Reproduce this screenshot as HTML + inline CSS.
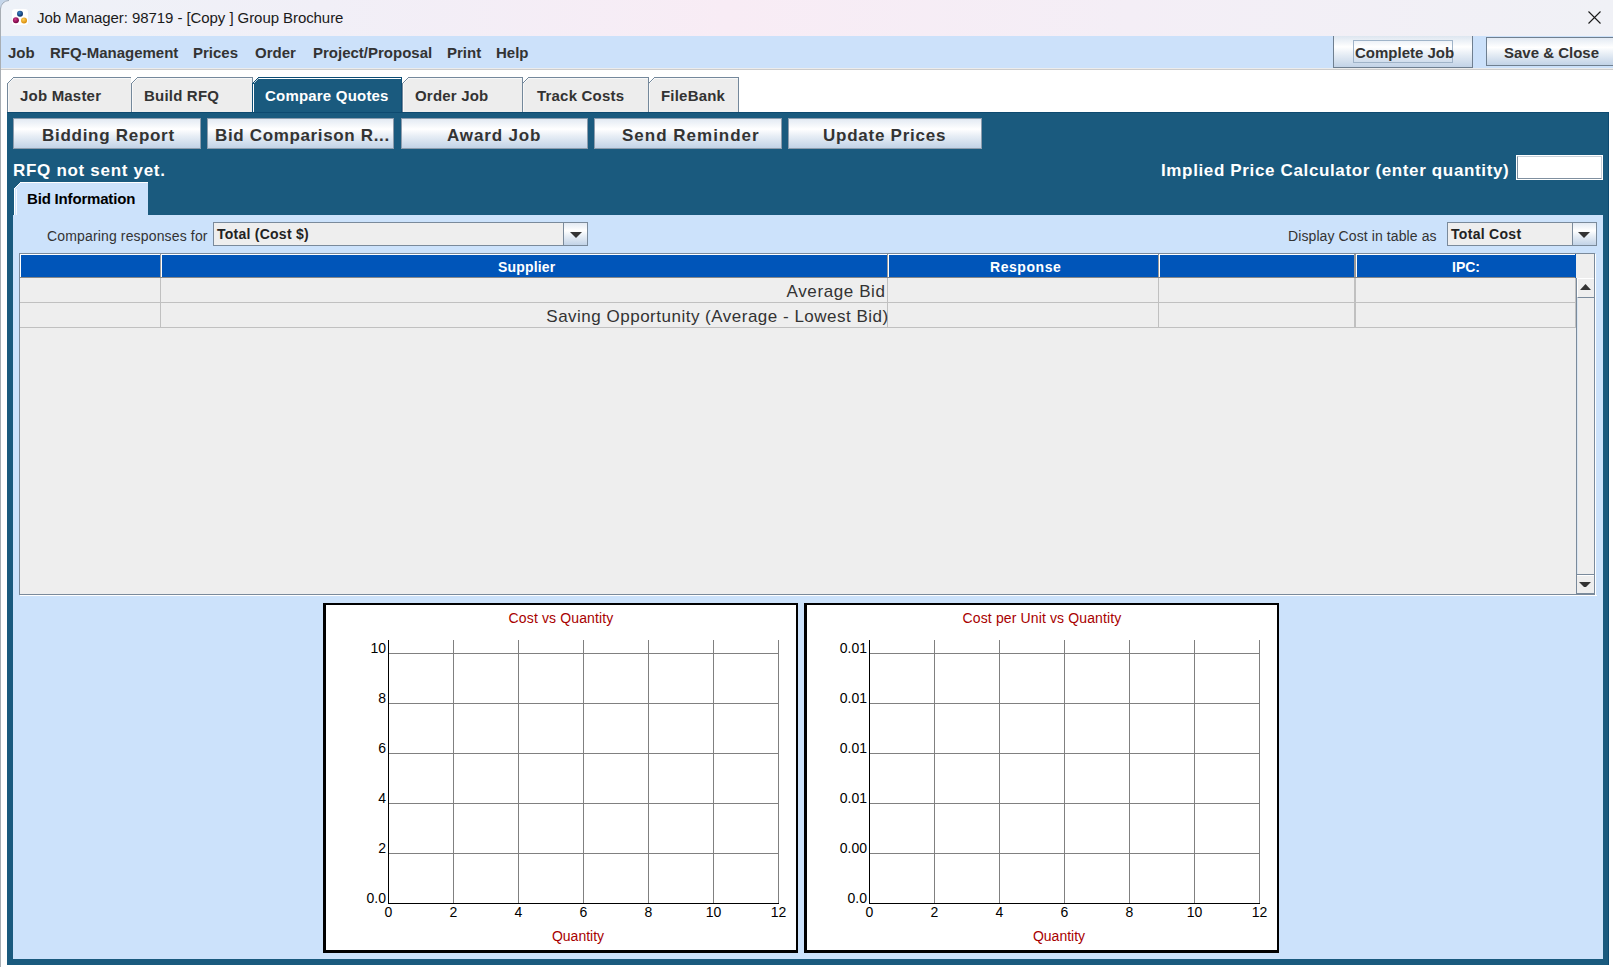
<!DOCTYPE html>
<html><head><meta charset="utf-8">
<style>
*{box-sizing:border-box;margin:0;padding:0}
html,body{width:1613px;height:967px;overflow:hidden;background:#fff;font-family:"Liberation Sans",sans-serif;position:relative}
.a{position:absolute;white-space:nowrap}
#title{left:0;top:0;width:1613px;height:36px;background:linear-gradient(90deg,#eef2f8 0%,#f1eff7 20%,#f8ecf5 45%,#f4eef6 70%,#f0f1f6 100%)}
#menubar{left:0;top:36px;width:1613px;height:32px;background:#cce1fa}
.mi{position:absolute;top:44px;font-size:15px;font-weight:bold;color:#333;white-space:nowrap}
.tab{position:absolute;top:77px;height:35px;background:#ededed;border-top:1px solid #6f8397;border-right:1px solid #6f8397;border-left:1px solid #6f8397;font-size:15px;font-weight:bold;color:#333;white-space:nowrap}
.tab span{position:absolute;top:9px}
.btn{position:absolute;top:118px;height:31px;background:linear-gradient(#e3eaf3 0%,#ffffff 35%,#e6edf5 60%,#c2d3e7 100%);border:1px solid #8c9cad;font-size:17px;font-weight:bold;color:#333;white-space:nowrap}
.btn span{position:absolute;top:7px}
.tl{position:absolute;top:87px;font-size:15px;font-weight:bold;white-space:nowrap;letter-spacing:0.2px}
.cl{position:absolute;font-size:14px;color:#000;white-space:nowrap}
.ct{position:absolute;font-size:14px;color:#a80000;text-align:center;white-space:nowrap}
.combo{position:absolute;top:222px;height:24px;background:#eeeeee;border:1px solid #7a8a9b}
.cbtn{position:absolute;top:222px;height:24px;width:25px;border:1px solid #7a8a9b;background:linear-gradient(#e3eaf3 0%,#ffffff 35%,#e6edf5 60%,#c2d3e7 100%)}
.hd{position:absolute;top:255px;height:22px;background:#0055b9}
.hdw{position:absolute;top:255px;width:1px;height:22px;background:#fff}
.hdt{position:absolute;top:259px;font-size:14px;font-weight:bold;color:#fff;white-space:nowrap}
.gl{position:absolute;background:#c0c0c0}
</style></head>
<body>
<div class="a" id="title"></div>
<!-- window icon -->
<svg class="a" style="left:12px;top:9px" width="16" height="16" viewBox="0 0 16 16">
<rect x="0" y="0" width="16" height="16" rx="3" fill="#fff"/>
<defs>
<radialGradient id="gb" cx="0.4" cy="0.35" r="0.65"><stop offset="0" stop-color="#3f86c8"/><stop offset="1" stop-color="#0b2f63"/></radialGradient>
<radialGradient id="gm" cx="0.4" cy="0.35" r="0.65"><stop offset="0" stop-color="#d03a8a"/><stop offset="1" stop-color="#72003e"/></radialGradient>
<radialGradient id="go" cx="0.4" cy="0.35" r="0.65"><stop offset="0" stop-color="#ffd15a"/><stop offset="1" stop-color="#d78a08"/></radialGradient>
</defs>
<circle cx="8" cy="4.7" r="3" fill="url(#gb)"/>
<circle cx="3.9" cy="11.3" r="3" fill="url(#gm)"/>
<circle cx="12" cy="11.5" r="3" fill="url(#go)"/>
</svg>
<div class="a" style="left:37px;top:9px;font-size:15px;color:#1a1a1a;letter-spacing:-0.07px">Job Manager: 98719 - [Copy ] Group Brochure</div>
<svg class="a" style="left:1588px;top:11px" width="13" height="13" viewBox="0 0 13 13"><path d="M0.5 0.5L12.5 12.5M12.5 0.5L0.5 12.5" stroke="#1a1a1a" stroke-width="1.1"/></svg>
<div class="a" id="menubar"></div>
<div class="a" style="left:0;top:68px;width:1613px;height:1px;background:#ececec"></div>
<div class="a" style="left:0;top:69px;width:1613px;height:1px;background:#cccccc"></div>
<div class="a" style="left:0;top:70px;width:1613px;height:897px;background:#fff"></div>
<div class="mi" style="left:8px">Job</div>
<div class="mi" style="left:50px">RFQ-Management</div>
<div class="mi" style="left:193px">Prices</div>
<div class="mi" style="left:255px">Order</div>
<div class="mi" style="left:313px">Project/Proposal</div>
<div class="mi" style="left:447px">Print</div>
<div class="mi" style="left:496px">Help</div>
<!-- top right buttons -->
<div class="a" style="left:1333px;top:36px;width:140px;height:32px;background:linear-gradient(#dde6f0 0%,#ffffff 35%,#e6edf5 60%,#c2d3e7 100%);border:1px solid #6f7f90;border-top:none"></div>
<div class="a" style="left:1353px;top:40px;width:100px;height:23px;border:1px solid #9fb3c8"></div>
<div class="a" style="left:1355px;top:44px;font-size:15px;font-weight:bold;color:#333">Complete Job</div>
<div class="a" style="left:1486px;top:37px;width:140px;height:29px;background:linear-gradient(#e3eaf3 0%,#ffffff 35%,#e6edf5 60%,#c2d3e7 100%);border:1px solid #6f7f90"></div>
<div class="a" style="left:1504px;top:44px;font-size:15px;font-weight:bold;color:#333">Save &amp; Close</div>

<!-- left window border -->
<svg class="a" style="left:0;top:0" width="10" height="10"><path d="M0 0H9A9 9 0 0 0 0 9Z" fill="#c5d6ea"/><path d="M9 0.5A8.5 8.5 0 0 0 0.5 9" fill="none" stroke="#9aa8b8" stroke-width="1"/></svg>
<div class="a" style="left:0;top:9px;width:1px;height:958px;background:#a8aeb4"></div>

<!-- tabs -->
<svg class="a" style="left:0;top:70px" width="760" height="43" shape-rendering="crispEdges">
<polygon points="7,42 7,13 13,7 131,7 131,42" fill="#ededed"/>
<rect x="14" y="8" width="116" height="1" fill="#fff" opacity="0.6"/>
<rect x="8" y="14" width="1" height="28" fill="#fff" opacity="0.6"/>
<rect x="7" y="13" width="1" height="29" fill="#74889b"/>
<rect x="13" y="7" width="118" height="1" fill="#74889b"/>
<rect x="8" y="12" width="1" height="1" fill="#74889b"/>
<rect x="9" y="12" width="1" height="1" fill="#fff" opacity="0.7"/>
<rect x="9" y="11" width="1" height="1" fill="#74889b"/>
<rect x="10" y="11" width="1" height="1" fill="#fff" opacity="0.7"/>
<rect x="10" y="10" width="1" height="1" fill="#74889b"/>
<rect x="11" y="10" width="1" height="1" fill="#fff" opacity="0.7"/>
<rect x="11" y="9" width="1" height="1" fill="#74889b"/>
<rect x="12" y="9" width="1" height="1" fill="#fff" opacity="0.7"/>
<rect x="12" y="8" width="1" height="1" fill="#74889b"/>
<rect x="13" y="8" width="1" height="1" fill="#fff" opacity="0.7"/>
<polygon points="131,42 131,13 137,7 253,7 253,42" fill="#ededed"/>
<rect x="138" y="8" width="114" height="1" fill="#fff" opacity="0.6"/>
<rect x="132" y="14" width="1" height="28" fill="#fff" opacity="0.6"/>
<rect x="131" y="13" width="1" height="29" fill="#74889b"/>
<rect x="137" y="7" width="116" height="1" fill="#74889b"/>
<rect x="132" y="12" width="1" height="1" fill="#74889b"/>
<rect x="133" y="12" width="1" height="1" fill="#fff" opacity="0.7"/>
<rect x="133" y="11" width="1" height="1" fill="#74889b"/>
<rect x="134" y="11" width="1" height="1" fill="#fff" opacity="0.7"/>
<rect x="134" y="10" width="1" height="1" fill="#74889b"/>
<rect x="135" y="10" width="1" height="1" fill="#fff" opacity="0.7"/>
<rect x="135" y="9" width="1" height="1" fill="#74889b"/>
<rect x="136" y="9" width="1" height="1" fill="#fff" opacity="0.7"/>
<rect x="136" y="8" width="1" height="1" fill="#74889b"/>
<rect x="137" y="8" width="1" height="1" fill="#fff" opacity="0.7"/>
<rect x="252" y="7" width="1" height="35" fill="#74889b"/>
<polygon points="252,42 252,13 258,7 402,7 402,42" fill="#1a5a7e"/>
<rect x="259" y="8" width="142" height="1" fill="#fff" opacity="1"/>
<rect x="253" y="14" width="1" height="28" fill="#fff" opacity="1"/>
<rect x="252" y="13" width="1" height="29" fill="#0d4d75"/>
<rect x="258" y="7" width="144" height="1" fill="#0d4d75"/>
<rect x="253" y="12" width="1" height="1" fill="#0d4d75"/>
<rect x="254" y="12" width="1" height="1" fill="#fff" opacity="0.7"/>
<rect x="254" y="11" width="1" height="1" fill="#0d4d75"/>
<rect x="255" y="11" width="1" height="1" fill="#fff" opacity="0.7"/>
<rect x="255" y="10" width="1" height="1" fill="#0d4d75"/>
<rect x="256" y="10" width="1" height="1" fill="#fff" opacity="0.7"/>
<rect x="256" y="9" width="1" height="1" fill="#0d4d75"/>
<rect x="257" y="9" width="1" height="1" fill="#fff" opacity="0.7"/>
<rect x="257" y="8" width="1" height="1" fill="#0d4d75"/>
<rect x="258" y="8" width="1" height="1" fill="#fff" opacity="0.7"/>
<rect x="401" y="7" width="1" height="35" fill="#0d4d75"/>
<polygon points="402,42 402,13 408,7 523,7 523,42" fill="#ededed"/>
<rect x="409" y="8" width="113" height="1" fill="#fff" opacity="0.6"/>
<rect x="403" y="14" width="1" height="28" fill="#fff" opacity="0.6"/>
<rect x="402" y="13" width="1" height="29" fill="#74889b"/>
<rect x="408" y="7" width="115" height="1" fill="#74889b"/>
<rect x="403" y="12" width="1" height="1" fill="#74889b"/>
<rect x="404" y="12" width="1" height="1" fill="#fff" opacity="0.7"/>
<rect x="404" y="11" width="1" height="1" fill="#74889b"/>
<rect x="405" y="11" width="1" height="1" fill="#fff" opacity="0.7"/>
<rect x="405" y="10" width="1" height="1" fill="#74889b"/>
<rect x="406" y="10" width="1" height="1" fill="#fff" opacity="0.7"/>
<rect x="406" y="9" width="1" height="1" fill="#74889b"/>
<rect x="407" y="9" width="1" height="1" fill="#fff" opacity="0.7"/>
<rect x="407" y="8" width="1" height="1" fill="#74889b"/>
<rect x="408" y="8" width="1" height="1" fill="#fff" opacity="0.7"/>
<rect x="522" y="7" width="1" height="35" fill="#74889b"/>
<polygon points="522,42 522,13 528,7 649,7 649,42" fill="#ededed"/>
<rect x="529" y="8" width="119" height="1" fill="#fff" opacity="0.6"/>
<rect x="523" y="14" width="1" height="28" fill="#fff" opacity="0.6"/>
<rect x="522" y="13" width="1" height="29" fill="#74889b"/>
<rect x="528" y="7" width="121" height="1" fill="#74889b"/>
<rect x="523" y="12" width="1" height="1" fill="#74889b"/>
<rect x="524" y="12" width="1" height="1" fill="#fff" opacity="0.7"/>
<rect x="524" y="11" width="1" height="1" fill="#74889b"/>
<rect x="525" y="11" width="1" height="1" fill="#fff" opacity="0.7"/>
<rect x="525" y="10" width="1" height="1" fill="#74889b"/>
<rect x="526" y="10" width="1" height="1" fill="#fff" opacity="0.7"/>
<rect x="526" y="9" width="1" height="1" fill="#74889b"/>
<rect x="527" y="9" width="1" height="1" fill="#fff" opacity="0.7"/>
<rect x="527" y="8" width="1" height="1" fill="#74889b"/>
<rect x="528" y="8" width="1" height="1" fill="#fff" opacity="0.7"/>
<rect x="648" y="7" width="1" height="35" fill="#74889b"/>
<polygon points="648,42 648,13 654,7 739,7 739,42" fill="#ededed"/>
<rect x="655" y="8" width="83" height="1" fill="#fff" opacity="0.6"/>
<rect x="649" y="14" width="1" height="28" fill="#fff" opacity="0.6"/>
<rect x="648" y="13" width="1" height="29" fill="#74889b"/>
<rect x="654" y="7" width="85" height="1" fill="#74889b"/>
<rect x="649" y="12" width="1" height="1" fill="#74889b"/>
<rect x="650" y="12" width="1" height="1" fill="#fff" opacity="0.7"/>
<rect x="650" y="11" width="1" height="1" fill="#74889b"/>
<rect x="651" y="11" width="1" height="1" fill="#fff" opacity="0.7"/>
<rect x="651" y="10" width="1" height="1" fill="#74889b"/>
<rect x="652" y="10" width="1" height="1" fill="#fff" opacity="0.7"/>
<rect x="652" y="9" width="1" height="1" fill="#74889b"/>
<rect x="653" y="9" width="1" height="1" fill="#fff" opacity="0.7"/>
<rect x="653" y="8" width="1" height="1" fill="#74889b"/>
<rect x="654" y="8" width="1" height="1" fill="#fff" opacity="0.7"/>
<rect x="738" y="7" width="1" height="35" fill="#74889b"/>
</svg>
<div class="tl" style="left:20px;color:#333">Job Master</div>
<div class="tl" style="left:144px;color:#333">Build RFQ</div>
<div class="tl" style="left:265px;color:#fff">Compare Quotes</div>
<div class="tl" style="left:415px;color:#333">Order Job</div>
<div class="tl" style="left:537px;color:#333">Track Costs</div>
<div class="tl" style="left:661px;color:#333">FileBank</div>
<!-- main teal panel -->
<div class="a" style="left:7px;top:112px;width:1602px;height:853px;background:#1a5a7e;border-top:1px solid #0e4a70;border-right:1px solid #0e4a70"></div>

<div class="btn" style="left:13px;width:188px"><span style="left:28px;letter-spacing:0.72px">Bidding Report</span></div>
<div class="btn" style="left:207px;width:187px"><span style="left:7px;letter-spacing:0.65px">Bid Comparison R...</span></div>
<div class="btn" style="left:401px;width:187px"><span style="left:45px;letter-spacing:0.85px">Award Job</span></div>
<div class="btn" style="left:594px;width:188px"><span style="left:27px;letter-spacing:1.0px">Send Reminder</span></div>
<div class="btn" style="left:788px;width:194px"><span style="left:34px;letter-spacing:0.75px">Update Prices</span></div>

<div class="a" style="left:13px;top:161px;font-size:17px;font-weight:bold;color:#fff;letter-spacing:0.7px">RFQ not sent yet.</div>
<div class="a" style="left:1161px;top:161px;font-size:17px;font-weight:bold;color:#fff;letter-spacing:0.64px">Implied Price Calculator (enter quantity)</div>
<div class="a" style="left:1516px;top:155px;width:87px;height:25px;background:#fff;border:1px solid #fff"></div><div class="a" style="left:1517px;top:156px;width:85px;height:23px;border:1px solid #7f8f9f;border-top-color:#c8d0d8;border-right-color:#c8d0d8"></div>

<!-- inner tab -->
<svg class="a" style="left:0;top:176px" width="160" height="42" shape-rendering="crispEdges">
<polygon points="14,40 14,12 20,6 148,6 148,40" fill="#cce2fb"/>
<rect x="20" y="6" width="128" height="1" fill="#fff"/>
<rect x="14" y="12" width="1" height="27" fill="#fff"/>
<rect x="16" y="13" width="1" height="26" fill="#fff" opacity="0.8"/>
<rect x="15" y="11" width="1" height="1" fill="#fff"/><rect x="16" y="10" width="1" height="1" fill="#fff"/><rect x="17" y="9" width="1" height="1" fill="#fff"/><rect x="18" y="8" width="1" height="1" fill="#fff"/><rect x="19" y="7" width="1" height="1" fill="#fff"/>
</svg>
<div class="a" style="left:27px;top:190px;font-size:15px;font-weight:bold;color:#000;letter-spacing:-0.18px">Bid Information</div>

<!-- light panel -->
<div class="a" style="left:13px;top:215px;width:1590px;height:744px;background:#cce2fb"></div>

<div class="a" style="left:47px;top:228px;font-size:14px;color:#333;letter-spacing:0.15px">Comparing responses for</div>
<div class="combo" style="left:213px;width:351px"></div>
<div class="a" style="left:217px;top:226px;font-size:14px;font-weight:bold;color:#222;letter-spacing:0.25px">Total (Cost $)</div>
<div class="cbtn" style="left:563px"></div>
<svg class="a" style="left:570px;top:232px" width="12" height="6"><path d="M0 0H12L6 6Z" fill="#333"/></svg>

<div class="a" style="left:1288px;top:228px;font-size:14px;color:#333;letter-spacing:0.1px">Display Cost in table as</div>
<div class="combo" style="left:1447px;width:126px"></div>
<div class="a" style="left:1451px;top:226px;font-size:14px;font-weight:bold;color:#222;letter-spacing:0.3px">Total Cost</div>
<div class="cbtn" style="left:1572px"></div>
<svg class="a" style="left:1578px;top:232px" width="12" height="6"><path d="M0 0H12L6 6Z" fill="#333"/></svg>

<!-- table -->
<div class="a" style="left:19px;top:253px;width:1576px;height:342px;background:#eeeeee;border:1px solid #7a8a9b"></div>
<div class="a" style="left:20px;top:595px;width:1577px;height:1px;background:#fff"></div>
<div class="a" style="left:1595px;top:254px;width:1px;height:342px;background:#fff"></div>
<div class="a" style="left:20px;top:254px;width:1555px;height:1px;background:#fff"></div>
<div class="hd" style="left:20px;width:1555px"></div><div class="a" style="left:20px;top:254px;width:1px;height:23px;background:#fff"></div>
<div class="a" style="left:20px;top:277px;width:1556px;height:1px;background:#888"></div>
<div class="a" style="left:1575px;top:254px;width:1px;height:24px;background:#0055b9"></div>
<!-- header separators -->
<div class="a" style="left:160px;top:254px;width:1px;height:23px;background:#999"></div><div class="hdw" style="left:161px"></div>
<div class="a" style="left:887px;top:254px;width:1px;height:23px;background:#999"></div><div class="hdw" style="left:888px"></div>
<div class="a" style="left:1158px;top:254px;width:1px;height:23px;background:#999"></div><div class="hdw" style="left:1159px"></div>
<div class="a" style="left:1354px;top:254px;width:2px;height:23px;background:#999"></div><div class="hdw" style="left:1356px"></div>
<div class="hdt" style="left:498px;letter-spacing:0.17px">Supplier</div>
<div class="hdt" style="left:990px;letter-spacing:0.55px">Response</div>
<div class="hdt" style="left:1452px">IPC:</div>
<!-- grid -->
<div class="gl" style="left:20px;top:302px;width:1555px;height:1px"></div>
<div class="gl" style="left:20px;top:327px;width:1555px;height:1px"></div>
<div class="gl" style="left:160px;top:278px;width:1px;height:50px"></div>
<div class="gl" style="left:887px;top:278px;width:1px;height:50px"></div>
<div class="gl" style="left:1158px;top:278px;width:1px;height:50px"></div>
<div class="gl" style="left:1354px;top:278px;width:2px;height:50px"></div>
<div class="gl" style="left:1575px;top:278px;width:1px;height:50px"></div>
<div class="a" style="right:727.5px;top:282px;font-size:17px;color:#333;letter-spacing:0.6px">Average Bid</div>
<div class="a" style="right:724.3px;top:307px;font-size:17px;color:#333;letter-spacing:0.5px">Saving Opportunity (Average - Lowest Bid)</div>
<!-- scrollbar -->
<div class="a" style="left:1576px;top:278px;width:18px;height:316px;background:#eeeeee;border-left:1px solid #7a8a9b"></div><div class="a" style="left:1577px;top:298px;width:1px;height:276px;background:#dbe6f2"></div>
<div class="a" style="left:1577px;top:278px;width:17px;height:20px;background:#eeeeee;border-top:1px solid #fff;border-left:1px solid #fff;border-bottom:1px solid #7a8a9b"></div>
<svg class="a" style="left:1580px;top:284px" width="11" height="6"><path d="M5.5 0L11 6H0Z" fill="#333"/></svg>
<div class="a" style="left:1577px;top:574px;width:17px;height:20px;background:#eeeeee;border-top:1px solid #7a8a9b;border-bottom:1px solid #7a8a9b"></div>
<div class="a" style="left:1577px;top:575px;width:17px;height:1px;background:#fff"></div>
<svg class="a" style="left:1579px;top:582px" width="12" height="5"><path d="M0 0H12L7 5H5Z" fill="#333"/></svg>

<div class="a" style="left:323px;top:603px;width:475px;height:350px;background:#fff;border-left:3px solid #000;border-bottom:3px solid #000;border-top:2px solid #000;border-right:2px solid #000"></div>
<svg class="a" style="left:388px;top:640px" width="392" height="265" shape-rendering="crispEdges"><rect x="65" y="0" width="1" height="263" fill="#808080"/><rect x="130" y="0" width="1" height="263" fill="#808080"/><rect x="195" y="0" width="1" height="263" fill="#808080"/><rect x="260" y="0" width="1" height="263" fill="#808080"/><rect x="325" y="0" width="1" height="263" fill="#808080"/><rect x="390" y="0" width="1" height="263" fill="#808080"/><rect x="0" y="13" width="390" height="1" fill="#808080"/><rect x="0" y="63" width="390" height="1" fill="#808080"/><rect x="0" y="113" width="390" height="1" fill="#808080"/><rect x="0" y="163" width="390" height="1" fill="#808080"/><rect x="0" y="213" width="390" height="1" fill="#808080"/><rect x="0" y="0" width="1" height="264" fill="#000"/><rect x="0" y="263" width="391" height="1" fill="#000"/></svg>
<div class="cl" style="right:1227px;top:640px">10</div>
<div class="cl" style="right:1227px;top:690px">8</div>
<div class="cl" style="right:1227px;top:740px">6</div>
<div class="cl" style="right:1227px;top:790px">4</div>
<div class="cl" style="right:1227px;top:840px">2</div>
<div class="cl" style="right:1227px;top:890px">0.0</div>
<div class="cl" style="left:348px;width:81px;text-align:center;top:904px">0</div>
<div class="cl" style="left:413px;width:81px;text-align:center;top:904px">2</div>
<div class="cl" style="left:478px;width:81px;text-align:center;top:904px">4</div>
<div class="cl" style="left:543px;width:81px;text-align:center;top:904px">6</div>
<div class="cl" style="left:608px;width:81px;text-align:center;top:904px">8</div>
<div class="cl" style="left:673px;width:81px;text-align:center;top:904px">10</div>
<div class="cl" style="left:738px;width:81px;text-align:center;top:904px">12</div>
<div class="ct" style="left:411px;width:300px;top:610px;letter-spacing:0.13px">Cost vs Quantity</div>
<div class="ct" style="left:428px;width:300px;top:928px">Quantity</div>
<div class="a" style="left:804px;top:603px;width:475px;height:350px;background:#fff;border-left:3px solid #000;border-bottom:3px solid #000;border-top:2px solid #000;border-right:2px solid #000"></div>
<svg class="a" style="left:869px;top:640px" width="392" height="265" shape-rendering="crispEdges"><rect x="65" y="0" width="1" height="263" fill="#808080"/><rect x="130" y="0" width="1" height="263" fill="#808080"/><rect x="195" y="0" width="1" height="263" fill="#808080"/><rect x="260" y="0" width="1" height="263" fill="#808080"/><rect x="325" y="0" width="1" height="263" fill="#808080"/><rect x="390" y="0" width="1" height="263" fill="#808080"/><rect x="0" y="13" width="390" height="1" fill="#808080"/><rect x="0" y="63" width="390" height="1" fill="#808080"/><rect x="0" y="113" width="390" height="1" fill="#808080"/><rect x="0" y="163" width="390" height="1" fill="#808080"/><rect x="0" y="213" width="390" height="1" fill="#808080"/><rect x="0" y="0" width="1" height="264" fill="#000"/><rect x="0" y="263" width="391" height="1" fill="#000"/></svg>
<div class="cl" style="right:746px;top:640px">0.01</div>
<div class="cl" style="right:746px;top:690px">0.01</div>
<div class="cl" style="right:746px;top:740px">0.01</div>
<div class="cl" style="right:746px;top:790px">0.01</div>
<div class="cl" style="right:746px;top:840px">0.00</div>
<div class="cl" style="right:746px;top:890px">0.0</div>
<div class="cl" style="left:829px;width:81px;text-align:center;top:904px">0</div>
<div class="cl" style="left:894px;width:81px;text-align:center;top:904px">2</div>
<div class="cl" style="left:959px;width:81px;text-align:center;top:904px">4</div>
<div class="cl" style="left:1024px;width:81px;text-align:center;top:904px">6</div>
<div class="cl" style="left:1089px;width:81px;text-align:center;top:904px">8</div>
<div class="cl" style="left:1154px;width:81px;text-align:center;top:904px">10</div>
<div class="cl" style="left:1219px;width:81px;text-align:center;top:904px">12</div>
<div class="ct" style="left:892px;width:300px;top:610px;letter-spacing:0.13px">Cost per Unit vs Quantity</div>
<div class="ct" style="left:909px;width:300px;top:928px">Quantity</div>

</body></html>
